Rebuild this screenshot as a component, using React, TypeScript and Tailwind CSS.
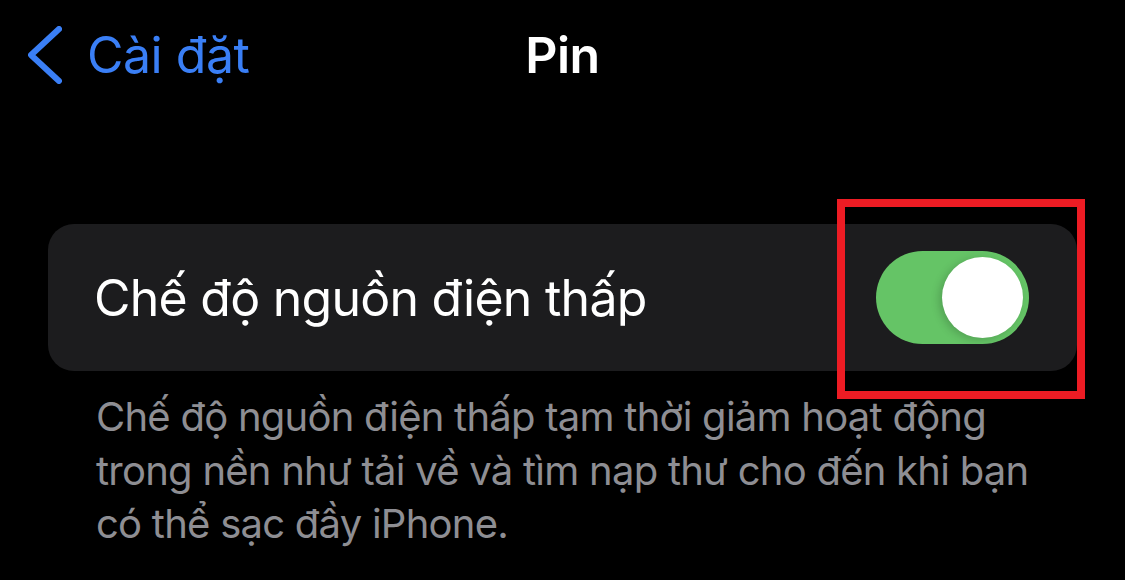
import React from "react";

function BackChevron() {
  return (
    <svg width="34" height="58" viewBox="0 0 34 58" fill="none" className="shrink-0">
      <path
        d="M31 3 L3 29 L31 55"
        stroke="#3a7ff6"
        strokeWidth="6"
        strokeLinecap="round"
        strokeLinejoin="round"
      />
    </svg>
  );
}

function Toggle({ on }: { on: boolean }) {
  return (
    <div
      className={
        "w-[153px] h-[93px] rounded-full p-[6px] flex " +
        (on ? "bg-[#65c466] justify-end" : "bg-[#39393d] justify-start")
      }
    >
      <div className="w-[81px] h-[81px] rounded-full bg-white shadow-[-3px_2px_8px_rgba(0,0,0,0.18)]" />
    </div>
  );
}

export default function App() {
  return (
    <div
      className="w-[1125px] h-[580px] bg-black overflow-hidden"
      style={{ fontFamily: "Inter, 'Noto Sans', sans-serif" }}
    >
      {/* nav bar */}
      <header className="grid grid-cols-[1fr_auto_1fr] items-center h-[108px] pt-[1px]">
        <div className="flex items-center pl-[28px]">
          <BackChevron />
          <span className="ml-[25px] text-[50px] leading-none text-[#3a7ff6] tracking-[-0.5px]">
            Cài đặt
          </span>
        </div>
        <h1 className="text-[50px] leading-none font-semibold text-white tracking-[-0.5px]">Pin</h1>
        <div />
      </header>

      {/* low power row */}
      <div className="relative mt-[116px] mx-[48px] h-[147px] rounded-[26px] bg-[#1c1c1e] flex items-center justify-between pl-[46px] pr-[48px]">
        <span className="text-[50px] leading-none text-white tracking-[-0.75px]">
          Chế độ nguồn điện thấp
        </span>
        <Toggle on />
        <div className="absolute left-[789px] top-[-25px] w-[248px] h-[200px] border-[8px] border-[#ed1c24]" />
      </div>

      <p className="mt-[19px] pl-[96px] text-[40px] leading-[53.5px] text-[#8e8e93] tracking-[-0.75px]">
        <span className="block whitespace-nowrap">Chế độ nguồn điện thấp tạm thời giảm hoạt động</span>
        <span className="block whitespace-nowrap">trong nền như tải về và tìm nạp thư cho đến khi bạn</span>
        <span className="block whitespace-nowrap">có thể sạc đầy iPhone.</span>
      </p>
    </div>
  );
}
